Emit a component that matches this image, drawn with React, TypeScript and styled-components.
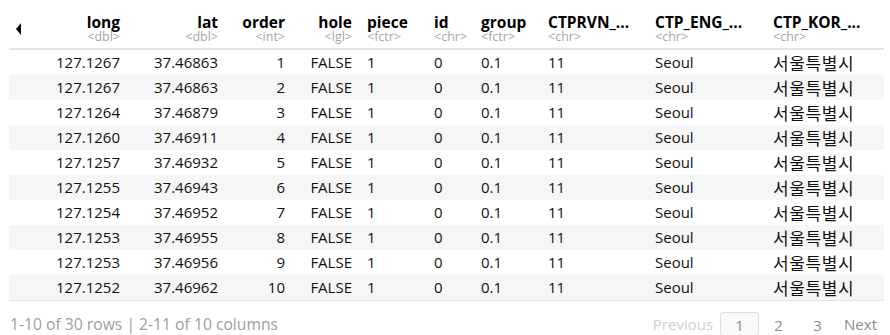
import React from 'react'
import styled, {createGlobalStyle} from 'styled-components'

const GlobalStyle = createGlobalStyle`
  html, body {
    margin: 0;
    padding: 0;
    background: #ffffff;
  }
  body {
    font-family: "Open Sans", "Noto Sans", "Liberation Sans", sans-serif;
    color: #111111;
  }
`;

interface IColumn {
    name: string;
    type: string;
    width: number;
    align: 'left' | 'right';
    kor?: boolean;
}

const columns: Array<IColumn> = [
    {name: 'long', type: '<dbl>', width: 98, align: 'right'},
    {name: 'lat', type: '<dbl>', width: 98, align: 'right'},
    {name: 'order', type: '<int>', width: 67, align: 'right'},
    {name: 'hole', type: '<lgl>', width: 67, align: 'right'},
    {name: 'piece', type: '<fctr>', width: 67, align: 'left'},
    {name: 'id', type: '<chr>', width: 47, align: 'left'},
    {name: 'group', type: '<fctr>', width: 67, align: 'left'},
    {name: 'CTPRVN_...', type: '<chr>', width: 107, align: 'left'},
    {name: 'CTP_ENG_...', type: '<chr>', width: 118, align: 'left'},
    {name: 'CTP_KOR_...', type: '<chr>', width: 118, align: 'left', kor: true},
];

const longs = ['127.1267', '127.1267', '127.1264', '127.1260', '127.1257', '127.1255', '127.1254', '127.1253', '127.1253', '127.1252'];
const lats = ['37.46863', '37.46863', '37.46879', '37.46911', '37.46932', '37.46943', '37.46952', '37.46955', '37.46956', '37.46962'];

const rows: Array<Array<string>> = longs.map((lng, i) => [
    lng, lats[i], String(i + 1), 'FALSE', '1', '0', '0.1', '11', 'Seoul', '서울특별시'
]);

const Wrapper = styled.div`
  width: 875px;
  margin-left: 9px;
`;

const Table = styled.table`
  width: 875px;
  table-layout: fixed;
  border-collapse: collapse;
  border-spacing: 0;
  font-size: 15px;
`;

const HeadRow = styled.tr`
  border-bottom: 2px solid #e4e4e4;
`;

const ArrowCell = styled.th`
  padding: 23px 0 0 7px;
  vertical-align: top;
  height: 48px;
  box-sizing: border-box;
`;

const ArrowLeft = styled.div`
  width: 0;
  height: 0;
  border-top: 6px solid transparent;
  border-bottom: 6px solid transparent;
  border-right: 5px solid #000000;
`;

const HeaderCell = styled.th<{ $align: string }>`
  text-align: ${p => p.$align};
  vertical-align: top;
  padding: 13px 8px 5px 7px;
  white-space: nowrap;
  overflow: hidden;
`;

const HeaderName = styled.div`
  font-weight: 700;
  font-size: 15.5px;
  line-height: 18px;
  color: #000000;
`;

const HeaderType = styled.div`
  font-weight: 400;
  font-size: 12.5px;
  line-height: 12px;
  color: #a6a6a6;
`;

const Row = styled.tr<{ $striped: boolean }>`
  background: ${p => p.$striped ? '#f6f6f6' : '#ffffff'};
  height: 25px;

  &:last-child {
    border-bottom: 1px solid #e4e4e4;
  }
`;

const Cell = styled.td<{ $align: string; $kor?: boolean }>`
  text-align: ${p => p.$align};
  padding: 0 8px 0 7px;
  line-height: 25px;
  white-space: nowrap;
  overflow: hidden;
  font-size: ${p => p.$kor ? '17px' : '15px'};
  letter-spacing: ${p => p.$kor ? '0.6px' : '0'};
  font-family: ${p => p.$kor
    ? '"Noto Sans CJK KR", "Open Sans", sans-serif'
    : '"Open Sans", "Noto Sans", sans-serif'};
`;

const Footer = styled.div`
  display: flex;
  justify-content: space-between;
  align-items: flex-start;
  padding-top: 11px;
  font-size: 15px;
  line-height: 22px;
`;

const Info = styled.div`
  color: #9e9e9e;
  font-size: 15.7px;
  padding: 1px 0 0 1px;
`;

const Pager = styled.div`
  display: flex;
  align-items: flex-start;
`;

const PagerLink = styled.span<{ $disabled?: boolean }>`
  padding: 1px 7px 0;
  color: ${p => p.$disabled ? '#cfcfcf' : '#8c8c8c'};
`;

const PageNumber = styled.span<{ $current?: boolean }>`
  box-sizing: border-box;
  width: 39px;
  height: 24px;
  text-align: center;
  color: #8c8c8c;
  border: 1px solid ${p => p.$current ? '#dddddd' : 'transparent'};
  border-radius: 3px;
  background: ${p => p.$current ? '#fafafa' : 'transparent'};
  padding-top: 1px;
`;

const App: React.FunctionComponent = () => {
    return (
        <>
            <GlobalStyle/>
            <Wrapper>
                <Table>
                    <colgroup>
                        <col style={{width: 21}}/>
                        {columns.map(c => <col key={c.name} style={{width: c.width}}/>)}
                    </colgroup>
                    <thead>
                    <HeadRow>
                        <ArrowCell><ArrowLeft/></ArrowCell>
                        {columns.map(c => (
                            <HeaderCell key={c.name} $align={c.align}>
                                <HeaderName>{c.name}</HeaderName>
                                <HeaderType>{c.type}</HeaderType>
                            </HeaderCell>
                        ))}
                    </HeadRow>
                    </thead>
                    <tbody>
                    {rows.map((row, i) => (
                        <Row key={i} $striped={i % 2 === 1}>
                            <td/>
                            {row.map((value, j) => (
                                <Cell key={j} $align={columns[j].align} $kor={columns[j].kor}>{value}</Cell>
                            ))}
                        </Row>
                    ))}
                    </tbody>
                </Table>
                <Footer>
                    <Info>1-10 of 30 rows | 2-11 of 10 columns</Info>
                    <Pager>
                        <PagerLink $disabled>Previous</PagerLink>
                        <PageNumber $current>1</PageNumber>
                        <PageNumber>2</PageNumber>
                        <PageNumber>3</PageNumber>
                        <PagerLink>Next</PagerLink>
                    </Pager>
                </Footer>
            </Wrapper>
        </>
    )
}

export default App;
